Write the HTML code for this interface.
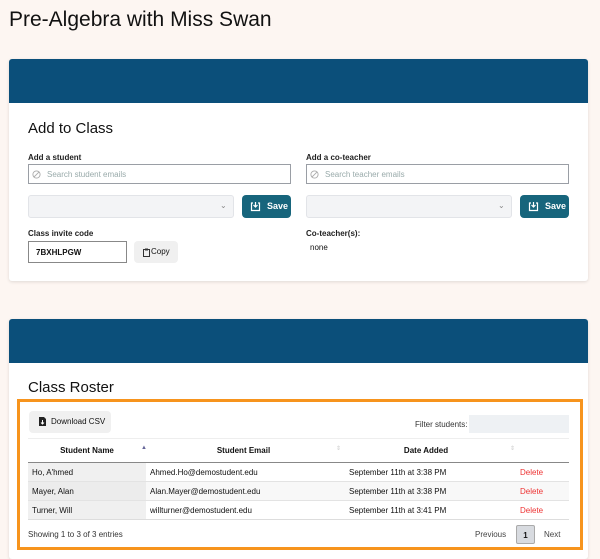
<!DOCTYPE html>
<html><head><style>
*{box-sizing:border-box;margin:0;padding:0}
body{width:600px;height:552px;background:#fdf6f2;font-family:"Liberation Sans",Arial,sans-serif;color:#111;position:relative;overflow:hidden}
.a{position:absolute}
h1{position:absolute;left:9px;top:8px;font-size:21px;font-weight:400;color:#111}
.card{position:absolute;left:9px;width:579px;background:#fff;box-shadow:0 1px 3px rgba(0,0,0,.12);border-radius:3px;overflow:hidden}
.band{height:44px;background:#0b4f7a}
.lbl{font-size:8px;font-weight:700;color:#222}
.inp{border:1px solid #9a9ea5;height:20px;font-size:8px;color:#9aa;padding:5px 0 0 18px}
.sel{background:#f3f4f6;border:1px solid #e2e4e8;border-radius:3px;height:23px}
.save{background:#17657c;color:#fff;border-radius:4px;height:23px;width:49px;font-size:9px;font-weight:700;padding:6px 0 0 25px}
.s8{font-size:8px}
td{font-size:8px;height:19px;border-top:1px solid #e3e3e3}
svg{position:absolute}
</style></head><body>
<h1>Pre-Algebra with Miss Swan</h1>
<div class="card" style="top:59px;height:222px"><div class="band"></div></div>
<div class="a" style="left:28px;top:120px;font-size:15px">Add to Class</div>
<div class="a lbl" style="left:28px;top:153px">Add a student</div>
<div class="a inp" style="left:28px;top:164px;width:263px">Search student emails</div>
<svg style="left:32px;top:170px" width="9" height="9" viewBox="0 0 10 10"><circle cx="5" cy="5" r="4" fill="none" stroke="#aaa"/><path d="M2 8L8 2" stroke="#aaa"/></svg>
<div class="a sel" style="left:28px;top:195px;width:206px"></div>
<div class="a s8" style="left:220px;top:201px;color:#888">⌄</div>
<div class="a save" style="left:242px;top:195px">Save</div>
<svg style="left:250px;top:201px" width="11" height="11" viewBox="0 0 11 11"><path d="M3 2H1.5V9.5H9.5V2H8M5.5 1V6M3.5 4L5.5 6L7.5 4" fill="none" stroke="#fff" stroke-width="1.2"/></svg>
<div class="a lbl" style="left:28px;top:229px">Class invite code</div>
<div class="a" style="left:28px;top:241px;width:99px;height:22px;border:1px solid #888;font-size:8px;font-weight:700;padding:6px 0 0 7px">7BXHLPGW</div>
<div class="a" style="left:134px;top:241px;width:44px;height:22px;background:#f0f0f0;border-radius:4px;font-size:8px;padding:6px 0 0 17px">Copy</div>
<svg style="left:143px;top:248px" width="7" height="9" viewBox="0 0 7 9"><rect x="0.5" y="1.5" width="6" height="7" fill="none" stroke="#333"/><rect x="2" y="0.5" width="3" height="2" fill="#333"/></svg>
<div class="a lbl" style="left:306px;top:153px">Add a co-teacher</div>
<div class="a inp" style="left:306px;top:164px;width:263px">Search teacher emails</div>
<svg style="left:310px;top:170px" width="9" height="9" viewBox="0 0 10 10"><circle cx="5" cy="5" r="4" fill="none" stroke="#aaa"/><path d="M2 8L8 2" stroke="#aaa"/></svg>
<div class="a sel" style="left:306px;top:195px;width:206px"></div>
<div class="a s8" style="left:498px;top:201px;color:#888">⌄</div>
<div class="a save" style="left:520px;top:195px">Save</div>
<svg style="left:528px;top:201px" width="11" height="11" viewBox="0 0 11 11"><path d="M3 2H1.5V9.5H9.5V2H8M5.5 1V6M3.5 4L5.5 6L7.5 4" fill="none" stroke="#fff" stroke-width="1.2"/></svg>
<div class="a lbl" style="left:306px;top:229px">Co-teacher(s):</div>
<div class="a s8" style="left:310px;top:243px">none</div>

<div class="card" style="top:319px;height:240px"><div class="band"></div></div>
<div class="a" style="left:28px;top:379px;font-size:15px">Class Roster</div>
<div class="a" style="left:17px;top:399px;width:566px;height:151px;border:3px solid #f7941d"></div>
<div class="a" style="left:29px;top:411px;width:82px;height:22px;background:#f0f0f0;border-radius:4px;font-size:8px;padding:6px 0 0 22px">Download CSV</div>
<svg style="left:39px;top:417px" width="7" height="9" viewBox="0 0 7 9"><path d="M0 0H5L7 2V9H0Z" fill="#222"/><path d="M3.5 3V7M2 5.5L3.5 7L5 5.5" stroke="#fff" fill="none"/></svg>
<div class="a s8" style="left:415px;top:420px;color:#333">Filter students:</div>
<div class="a" style="left:469px;top:415px;width:100px;height:18px;background:#eef1f4"></div>
<table class="a" style="left:28px;top:438px;width:541px;border-collapse:collapse">
<tr><td style="height:24px;border-top:1px solid #eee;border-bottom:1px solid #888;text-align:center;width:118px;font-weight:700">Student Name</td><td style="border-top:1px solid #eee;border-bottom:1px solid #888;text-align:center;width:195px;font-weight:700">Student Email</td><td style="border-top:1px solid #eee;border-bottom:1px solid #888;text-align:center;width:170px;font-weight:700">Date Added</td><td style="border-top:1px solid #eee;border-bottom:1px solid #888"></td></tr>
<tr><td style="background:#f0f0f0;padding-left:4px">Ho, A'hmed</td><td style="padding-left:4px">Ahmed.Ho@demostudent.edu</td><td style="padding-left:8px">September 11th at 3:38 PM</td><td style="color:#e33;padding-left:9px">Delete</td></tr>
<tr style="background:#f8f8f8"><td style="background:#ececec;padding-left:4px">Mayer, Alan</td><td style="padding-left:4px">Alan.Mayer@demostudent.edu</td><td style="padding-left:8px">September 11th at 3:38 PM</td><td style="color:#e33;padding-left:9px">Delete</td></tr>
<tr><td style="background:#f0f0f0;padding-left:4px;border-bottom:1px solid #ddd">Turner, Will</td><td style="padding-left:4px;border-bottom:1px solid #ddd">willturner@demostudent.edu</td><td style="padding-left:8px;border-bottom:1px solid #ddd">September 11th at 3:41 PM</td><td style="color:#e33;padding-left:9px;border-bottom:1px solid #ddd">Delete</td></tr>
</table>
<div class="a" style="left:141px;top:445px;font-size:6px;color:#669">▲</div>
<div class="a" style="left:336px;top:445px;font-size:6px;color:#ccc">⇕</div>
<div class="a" style="left:510px;top:445px;font-size:6px;color:#ccc">⇕</div>
<div class="a s8" style="left:28px;top:530px;color:#333">Showing 1 to 3 of 3 entries</div>
<div class="a s8" style="left:475px;top:530px;color:#444">Previous</div>
<div class="a" style="left:516px;top:525px;width:19px;height:19px;background:#d8dbe0;border:1px solid #aaa;border-radius:2px;font-size:8px;font-weight:700;text-align:center;padding-top:5px">1</div>
<div class="a s8" style="left:544px;top:530px;color:#444">Next</div>
</body></html>
